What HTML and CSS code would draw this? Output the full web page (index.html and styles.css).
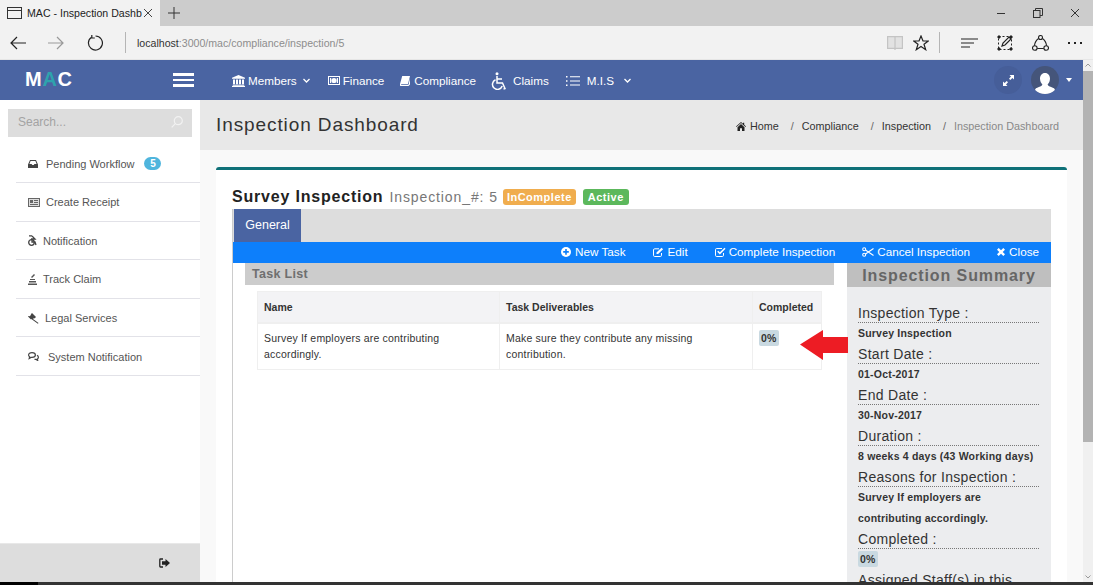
FILE: index.html

```html
<!DOCTYPE html>
<html lang="en">
<head>
  <meta charset="UTF-8">
  <title>MAC - Inspection Dashboard</title>
  <link rel="stylesheet" href="styles.css">
</head>
<body>
  <div class="tabstrip">
    <div class="tab">
      <svg width="16" height="14" viewBox="0 0 16 14" fill="none" stroke="#333"><rect x="0.5" y="1.5" width="14" height="11"/><path d="M1 4.5h13"/></svg>
      <span class="tab-title">MAC - Inspection Dashb</span>
      <svg class="tab-close" width="10" height="10" viewBox="0 0 10 10" stroke="#444"><path d="M1 1l8 8M9 1l-8 8"/></svg>
    </div>
    <svg class="tab-new" width="12" height="12" viewBox="0 0 12 12" stroke="#333"><path d="M6 0v12M0 6h12"/></svg>
    <div class="window-btns">
      <svg width="10" height="10" viewBox="0 0 10 10" stroke="#333"><path d="M1 5.5h8"/></svg>
      <svg width="10" height="10" viewBox="0 0 10 10" fill="none" stroke="#333"><rect x="0.5" y="2.5" width="6.5" height="7"/><path d="M2.5 2.5v-2h7v7h-2.5"/></svg>
      <svg width="10" height="10" viewBox="0 0 10 10" stroke="#333"><path d="M1 1l8 8M9 1l-8 8"/></svg>
    </div>
  </div>

  <div class="toolbar">
    <svg class="tb-back" width="16" height="14" viewBox="0 0 16 14" fill="none" stroke="#222" stroke-width="1.2"><path d="M16 7H1M7 1L1 7l6 6"/></svg>
    <svg class="tb-forward" width="16" height="14" viewBox="0 0 16 14" fill="none" stroke="#999" stroke-width="1.2"><path d="M0 7h15M9 1l6 6-6 6"/></svg>
    <svg class="tb-reload" width="16" height="16" viewBox="0 0 16 16" fill="none" stroke="#222" stroke-width="1.2"><path d="M4.5 2.2A7 7 0 1 0 8.500 1"/><path d="M4.800 0v3h3"/></svg>
    <span class="tb-sep"></span>
    <div class="address"><b>localhost</b>:3000/mac/compliance/inspection/5</div>
    <svg class="tb-book" width="16" height="14" viewBox="0 0 16 14" fill="#e2e2e2" stroke="#c4c4c4" stroke-width="1.2"><path d="M.6.6h6.900l.5 1 .5-1h6.900v11.800H8.500l-.5 1-.5-1H.6zM8 1.600v10.800"/></svg>
    <svg class="tb-star" width="16" height="16" viewBox="0 0 16 16" fill="none" stroke="#222" stroke-width="1.2"><path d="M8 1l2 5h5.300l-4.300 3.300 1.700 5.400L8 11.500l-4.700 3.200L5 9.300.7 6H6z"/></svg>
    <span class="tb-sep tb-sep-right"></span>
    <svg class="tb-hub" width="17" height="10" viewBox="0 0 17 10" stroke="#222" stroke-width="1.2"><path d="M0 1h17M0 5h13M0 9h9"/></svg>
    <svg class="tb-note" width="16" height="16" viewBox="0 0 16 16" fill="none" stroke="#222"><path d="M1.500 1.500h13v13h-13z" stroke-dasharray="2 2"/><path d="M1 1h2v2H1zM13 1h2v2h-2zM1 13h2v2H1zM13 13h2v2h-2z" fill="#222"/><path d="M5 11l1-3 6-6 2 2-6 6z" stroke-width="1.2"/></svg>
    <svg class="tb-share" width="17" height="16" viewBox="0 0 17 16" fill="none" stroke="#222" stroke-width="1.1"><circle cx="8.500" cy="2.500" r="2"/><circle cx="2.800" cy="13" r="2.300"/><circle cx="14.200" cy="13" r="2.300"/><path d="M6.500 3.500Q3 6 2.400 10.700M10.500 3.500Q14 6 14.600 10.700M5.200 13.500h6.600"/></svg>
    <span class="tb-more"><i></i><i></i><i></i></span>
  </div>

  <div class="app">
    <div class="app-main">
      <header class="topbar">
        <div class="logo">M<span>A</span>C</div>
        <div class="burger"><i></i><i></i><i></i></div>
        <nav class="mainnav">
          <a class="nav-members"><svg width="13" height="12" viewBox="0 0 13 12" fill="#fff"><path d="M6.500 0L13 2.800v.9H0v-.9zM1 4.500h2v4.700H1zM4 4.500h2v4.700H4zM7 4.500h2v4.700H7zM10 4.500h2v4.700h-2zM.7 9.800h11.600v.9H.7zM0 11h13v1H0z"/></svg>Members<svg class="chev" width="7" height="5" viewBox="0 0 7 5" fill="none" stroke="#fff" stroke-width="1.3"><path d="M.5 1l3 3 3-3"/></svg></a>
          <a class="nav-finance"><svg width="12" height="9" viewBox="0 0 12 9"><path d="M0 0h12v9H0z" fill="#fff"/><path d="M1 1h10v7H1z" fill="#4a64a2"/><circle cx="6" cy="4.500" r="2.600" fill="#fff"/><path d="M2 2h1.200v5H2zM8.800 2H10v5H8.800z" fill="#fff"/></svg>Finance</a>
          <a class="nav-compliance"><svg width="10" height="10" viewBox="0 0 10 10" fill="#fff"><path d="M2.200 0H10L8 8H1.500q-.7 0-.5.8h7.500L10 2.500V8.400L8.500 10H1Q-.4 10 0 8z"/></svg>Compliance</a>
          <a class="nav-claims"><svg width="16" height="18" viewBox="0 0 16 18" fill="none" stroke="#fff" stroke-width="1.5"><circle cx="6" cy="1.700" r="1.500" fill="#fff" stroke="none"/><path d="M6 4v7h5.500l2.500 5.500-1.500.6M6.200 7H11"/><path d="M4.500 7.800a5 5 0 1 0 6.700 6.200"/></svg>Claims</a>
          <a class="nav-mis"><svg width="14" height="10" viewBox="0 0 14 10" fill="#fff"><path d="M0 0h1.500v1.500H0zM0 4.200h1.500v1.500H0zM0 8.400h1.500V10H0zM4 .2h10v1H4zM4 4.400h10v1H4zM4 8.600h10v1H4z"/></svg>M.I.S<svg class="chev" width="7" height="5" viewBox="0 0 7 5" fill="none" stroke="#fff" stroke-width="1.3"><path d="M.5 1l3 3 3-3"/></svg></a>
        </nav>
        <div class="top-right">
          <span class="round-btn"><svg width="11" height="11" viewBox="0 0 11 11" fill="#fff"><path d="M6.500 0H11v4.500L9.400 3 7.300 5 6 3.700 8 1.600zM4.500 11H0V6.500L1.600 8l2.100-2L5 7.300 3 9.400z"/></svg></span>
          <span class="avatar"><svg width="22" height="22" viewBox="0 0 22 22" fill="#fff"><path d="M11 1c3.200 0 5 2.500 5 5.500 0 2.500-1 4.700-2.400 6 .3 1.300 1.500 1.900 3.500 2.600 2.500.8 3.900 1.700 3.900 3.400V22H1v-3.500c0-1.700 1.400-2.600 3.900-3.400 2-.7 3.200-1.300 3.500-2.600C7 11.200 6 9 6 6.500 6 3.500 7.800 1 11 1z"/></svg></span>
          <span class="caret"></span>
        </div>
      </header>

      <div class="app-body">
        <aside class="sidebar">
          <div class="search">
            <span>Search...</span>
            <svg width="12" height="12" viewBox="0 0 12 12" fill="none" stroke="#f2f2f2" stroke-width="1.2"><circle cx="7.300" cy="4.700" r="4"/><path d="M4.300 7.700L.7 11.300"/></svg>
          </div>
          <ul class="sidemenu">
            <li><svg class="gap-8" width="10" height="8" viewBox="0 0 10 8" fill="#444"><path d="M2 0h6l2 4.500V8H0V4.500zM2.600 1L1.400 4h2.200l.7 1h1.400l.7-1h2.200L7.400 1z"/></svg>Pending Workflow<span class="count">5</span></li>
            <li><svg class="gap-6" width="12" height="9" viewBox="0 0 12 9"><path d="M0 0h12v9H0z" fill="#666"/><path d="M1 1h10v7H1z" fill="#ddd"/><path d="M2 2h3v3H2zM6 2h4v1H6zM6 4h4v1H6zM2 6h8v1H2z" fill="#666"/></svg>Create Receipt</li>
            <li><svg class="gap-6" width="9" height="11" viewBox="0 0 9 11" fill="none" stroke="#444" stroke-width="1.3"><path d="M1 .8h3M4 1l3 3H3M4 4v3h3l1 3"/><circle cx="3.500" cy="7.500" r="2.800"/></svg>Notification</li>
            <li><svg class="gap-6" width="9" height="11" viewBox="0 0 9 11" fill="#555"><path d="M6 0l1 1-3 3-1-1zM2 5h5v1H2zM1 7h7v1.500H1zM0 9.500h9V11H0z"/></svg>Track Claim</li>
            <li><svg class="gap-6" width="11" height="11" viewBox="0 0 11 11" fill="#444"><path d="M4 0l4 4-1.500 1.500L6 5 5 6l5.500 4-.6.800L4 6.500l-.5-.5-.5.500-3-3 .5-.5L2 3.200 3.500.5z"/></svg>Legal Services</li>
            <li><svg class="gap-9" width="11" height="9" viewBox="0 0 11 9" fill="none" stroke="#444" stroke-width="1.2"><path d="M4 .6c2 0 3.400 1 3.400 2.400S6 5.400 4 5.400H3L1.200 6.500l.4-1.700C.9 4.400.6 3.800.6 3 .6 1.600 2 .6 4 .6zM9 3.200c1 .5 1.400 1.200 1.400 2 0 .7-.4 1.300-1 1.700l.3 1.500-1.700-1H6.500"/></svg>System Notification</li>
          </ul>
          <div class="side-foot">
            <svg width="11" height="10" viewBox="0 0 11 10"><path d="M4 1H1.500Q.8 1 .8 1.800v6.400Q.8 9 1.500 9H4" fill="none" stroke="#222" stroke-width="1.3"/><path d="M3 3.300h3.500V1L11 5 6.500 9V6.700H3z" fill="#222"/></svg>
          </div>
        </aside>

        <main class="content">
          <div class="page-head">
            <h2>Inspection Dashboard</h2>
            <ol class="crumbs">
              <li><svg width="10" height="9" viewBox="0 0 10 9" fill="#222"><path d="M5 0l2 1.800V.8h1.200v2L10 4.500l-.5.500L5 1 .5 5 0 4.500zM1.500 5.200L5 2l3.500 3.200V9H6V6.300H4V9H1.500z"/></svg>Home</li>
              <li>Compliance</li>
              <li>Inspection</li>
              <li class="current">Inspection Dashboard</li>
            </ol>
          </div>

          <section class="card">
            <div class="card-title">
              <h3>Survey Inspection</h3>
              <span class="subno">Inspection_#: 5</span>
              <span class="label label-warn">InComplete</span>
              <span class="label label-ok">Active</span>
            </div>
            <div class="panel">
              <div class="tabs"><a class="tab-on">General</a></div>
              <div class="actions">
                <a><svg width="10" height="10" viewBox="0 0 10 10"><circle cx="5" cy="5" r="5" fill="#fff"/><path d="M2.200 4.100h2V2.100h1.600v2h2v1.700h-2v2H4.200v-2h-2z" fill="#0d7ffb"/></svg>New Task</a>
                <a><svg width="11" height="10" viewBox="0 0 11 10" fill="none" stroke="#fff"><path d="M8.500 6v2.300q0 1.200-1.200 1.200H1.700Q.5 9.500.5 8.300V3q0-1.200 1.200-1.200H6"/><path d="M3.500 5.500L8.500.8l1.600 1.500-5 4.700H3.500z" fill="#fff" stroke="none"/></svg>Edit</a>
                <a class="tight"><svg width="11" height="10" viewBox="0 0 11 10" fill="none" stroke="#fff"><path d="M8.500 6v2.300q0 1.200-1.200 1.200H1.700Q.5 9.500.5 8.300V2.700q0-1.200 1.200-1.200H7"/><path d="M2.700 4.200l2.200 2.200L10 1.200" stroke-width="1.5"/></svg>Complete Inspection</a>
                <a class="tight"><svg width="12" height="10" viewBox="0 0 12 10" fill="none" stroke="#fff" stroke-width="1.1"><circle cx="2.200" cy="2.200" r="1.500"/><circle cx="2.200" cy="7.800" r="1.500"/><path d="M3.500 3l8 5.500M3.500 7l8-5.500"/></svg>Cancel Inspection</a>
                <a><svg width="8" height="8" viewBox="0 0 8 8"><path d="M1.700 0L4 2.300 6.300 0 8 1.700 5.700 4 8 6.300 6.300 8 4 5.700 1.700 8 0 6.300 2.300 4 0 1.700z" fill="#fff"/></svg>Close</a>
              </div>
              <div class="panel-body">
                <div class="task-col">
                  <div class="task-head">Task List</div>
                  <table class="tasks">
                    <thead>
                      <tr><th class="col-name">Name</th><th class="col-del">Task Deliverables</th><th class="col-done">Completed</th></tr>
                    </thead>
                    <tbody>
                      <tr>
                        <td>Survey If employers are contributing accordingly.</td>
                        <td>Make sure they contribute any missing contribution.</td>
                        <td><span class="pct">0%</span></td>
                      </tr>
                    </tbody>
                  </table>
                  <svg class="red-arrow" width="48" height="30" viewBox="0 0 48 30"><path d="M0 14.500L23 0v7h25v16H23v7z" fill="#ed1c24"/></svg>
                </div>
                <aside class="summary">
                  <div class="summary-head">Inspection Summary</div>
                  <dl class="summary-list">
                    <dt>Inspection Type :</dt>
                    <dd>Survey Inspection</dd>
                    <dt>Start Date :</dt>
                    <dd>01-Oct-2017</dd>
                    <dt>End Date :</dt>
                    <dd>30-Nov-2017</dd>
                    <dt>Duration :</dt>
                    <dd>8 weeks 4 days (43 Working days)</dd>
                    <dt>Reasons for Inspection :</dt>
                    <dd>Survey If employers are contributing accordingly.</dd>
                    <dt>Completed :</dt>
                    <dd><span class="pct">0%</span></dd>
                    <dt>Assigned Staff(s) in this</dt>
                  </dl>
                </aside>
              </div>
            </div>
          </section>
        </main>
      </div>
    </div>
    <div class="scrollbar">
      <svg class="scroll-arrow" width="10" height="11" viewBox="0 0 10 11" fill="none" stroke="#999"><path d="M2.500 6.500L5 4l2.500 2.500"/></svg>
      <div class="scroll-thumb"></div>
      <svg class="scroll-arrow scroll-arrow-down" width="10" height="11" viewBox="0 0 10 11" fill="none" stroke="#999"><path d="M2.500 4.500L5 7l2.500-2.500"/></svg>
    </div>
  </div>
  <div class="taskbar"></div>
</body>
</html>
```

FILE: styles.css

```css
* {
  box-sizing: border-box;
}
body {
  margin: 0;
  height: 585px;
  overflow: hidden;
  background: #fff;
  font-family: "Liberation Sans", Arial, sans-serif;
  color: #333;
}
svg {
  flex: none;
  display: block;
}

/* browser chrome */
.tabstrip {
  display: flex;
  align-items: center;
  height: 26px;
  background: #cccccc;
}
.tab {
  display: flex;
  align-items: center;
  width: 160px;
  height: 26px;
  padding-left: 7px;
  background: #f2f2f2;
}
.tab-title {
  width: 116px;
  margin-left: 4px;
  overflow: hidden;
  white-space: nowrap;
  font-size: 10.6px;
  color: #222;
}
.tab-new {
  margin-left: 8px;
}
.window-btns {
  display: flex;
  gap: 27px;
  margin-left: auto;
  padding-right: 13px;
}
.toolbar {
  display: flex;
  align-items: center;
  height: 34px;
  background: #f2f2f2;
  border-bottom: 1px solid #e6e6e6;
  padding-left: 10px;
}
.tb-forward {
  margin-left: 22px;
}
.tb-reload {
  margin-left: 23px;
}
.tb-sep {
  width: 1px;
  height: 21px;
  margin-left: 22px;
  background: #b5b5b5;
}
.address {
  margin-left: 11px;
  width: 750px;
  font-size: 10.6px;
  color: #8d8d8d;
}
.address b {
  font-weight: normal;
  color: #333;
}
.tb-star {
  margin-left: 10px;
}
.tb-sep-right {
  margin-left: 10px;
}
.tb-hub {
  margin-left: 21px;
}
.tb-note {
  margin-left: 19px;
}
.tb-share {
  margin-left: 19px;
}
.tb-more {
  display: flex;
  gap: 4px;
  margin-left: 19px;
}
.tb-more i {
  width: 2px;
  height: 2px;
  background: #222;
}

/* app frame */
.app {
  display: flex;
  height: 522px;
}
.app-main {
  flex: 1;
  min-width: 0;
  display: flex;
  flex-direction: column;
}
.taskbar {
  height: 3px;
  background: linear-gradient(90deg, #000 38px, #333 38px);
}
.scrollbar {
  width: 10px;
  display: flex;
  flex-direction: column;
  background: #f0f0f0;
}
.scroll-thumb {
  height: 371px;
  background: #b3b3b3;
}
.scroll-arrow-down {
  margin-top: auto;
}

.topbar {
  display: flex;
  align-items: center;
  height: 40px;
  flex: none;
  background: #4a64a2;
  color: #fff;
}
.logo {
  width: 173px;
  padding: 0 0 2px 25px;
  font-size: 20px;
  font-weight: bold;
  letter-spacing: 0.7px;
}
.logo span {
  color: #2ea3ad;
}
.burger {
  display: flex;
  flex-direction: column;
  gap: 3px;
  width: 21px;
}
.burger i {
  height: 2.5px;
  background: #fff;
}
.mainnav {
  display: flex;
  align-items: center;
  margin-left: 38px;
  padding-top: 1px;
  font-size: 11.7px;
}
.mainnav a {
  display: flex;
  align-items: center;
  gap: 3px;
}
.mainnav .nav-finance {
  margin-left: 18px;
}
.mainnav .nav-compliance {
  margin-left: 16px;
  gap: 4px;
}
.mainnav .nav-claims {
  margin-left: 15px;
  gap: 6px;
}
.mainnav .nav-mis {
  margin-left: 17px;
  gap: 7px;
}
.mainnav .chev {
  margin-left: 3px;
}
.top-right {
  display: flex;
  align-items: center;
  margin-left: auto;
  padding-right: 11px;
}
.round-btn, .avatar {
  display: flex;
  align-items: center;
  justify-content: center;
  width: 28px;
  height: 28px;
  border-radius: 50%;
  overflow: hidden;
}
.round-btn {
  background: #465e99;
}
.avatar {
  margin-left: 9px;
  background: #45557a;
  align-items: flex-end;
}
.caret {
  margin-left: 7px;
  border-top: 4px solid #fff;
  border-left: 3.5px solid transparent;
  border-right: 3.5px solid transparent;
}

.app-body {
  flex: 1;
  min-height: 0;
  display: flex;
}

/* sidebar */
.sidebar {
  width: 200px;
  flex: none;
  display: flex;
  flex-direction: column;
  background: #fff;
}
.search {
  display: flex;
  align-items: center;
  justify-content: space-between;
  height: 28px;
  margin: 9px 8px 0;
  padding: 0 9px 2px 10px;
  background: #dddddd;
  font-size: 12px;
  color: #a3a3a3;
}
.sidemenu {
  list-style: none;
  margin: 7.4px 0 0 16px;
  padding: 0;
  font-size: 11px;
  color: #555;
}
.sidemenu li {
  display: flex;
  align-items: center;
  height: 38.6px;
  padding: 1px 0 0 12px;
  border-bottom: 1px solid #e2e2e8;
}
.gap-6 {
  margin-right: 6px;
}
.gap-8 {
  margin-right: 8px;
}
.gap-9 {
  margin-right: 9px;
}
.count {
  margin-left: 10px;
  width: 17px;
  height: 13px;
  line-height: 13px;
  border-radius: 7px;
  text-align: center;
  font-size: 10px;
  font-weight: bold;
  color: #fff;
  background: #4fb5dd;
}
.side-foot {
  margin-top: auto;
  height: 39px;
  display: flex;
  align-items: center;
  padding-left: 159px;
  background: #dddddd;
  border-top: 1px solid #e8e8e8;
}

/* main content */
.content {
  flex: 1;
  min-width: 0;
  overflow: hidden;
  background: #f9f9f9;
}
.page-head {
  display: flex;
  align-items: center;
  justify-content: space-between;
  height: 50px;
  padding: 0 24px 0 16px;
  background: #e8e8e8;
}
.page-head h2 {
  margin: 0;
  font-size: 19px;
  font-weight: normal;
  letter-spacing: 0.9px;
  color: #333;
}
.crumbs {
  list-style: none;
  display: flex;
  margin: 2px 0 0;
  padding: 0;
  font-size: 10.8px;
  color: #333;
}
.crumbs li {
  display: flex;
  align-items: center;
  gap: 4px;
}
.crumbs li + li::before {
  content: "/";
  margin: 0 4px 0 12px;
  color: #666;
}
.crumbs .current {
  color: #888;
}
.card {
  margin: 17px 16px 0;
  height: 416px;
  padding: 0 16px;
  background: #fff;
  border-top: 3px solid #0f7178;
  border-radius: 3px 3px 0 0;
}
.card-title {
  display: flex;
  align-items: center;
  height: 39px;
  padding-top: 15px;
}
.card-title h3 {
  margin: 0 6px 0 0;
  font-size: 16px;
  letter-spacing: 0.8px;
  color: #222;
}
.subno {
  font-size: 14px;
  letter-spacing: 0.9px;
  color: #777;
  margin-right: 5px;
}
.label {
  margin-right: 7px;
  padding: 2px 4px;
  border-radius: 3px;
  font-size: 11px;
  line-height: 12px;
  font-weight: bold;
  letter-spacing: 0.5px;
  color: #fff;
}
.label-warn {
  background: #f0ad4e;
}
.label-ok {
  background: #5cb85c;
  padding: 2px 5px;
}
.panel {
  border-left: 1px solid #ccc;
}
.tabs {
  height: 33px;
  padding-left: 1px;
  background: #dddddd;
  display: flex;
}
.tab-on {
  width: 67px;
  line-height: 33px;
  text-align: center;
  font-size: 12.5px;
  color: #fff;
  background: #4a64a2;
}
.actions {
  display: flex;
  justify-content: flex-end;
  align-items: center;
  gap: 27px;
  height: 21px;
  padding: 0 12px 2px 0;
  background: #0d7ffb;
  font-size: 11.7px;
  color: #fff;
}
.actions a {
  display: flex;
  align-items: center;
  gap: 4px;
}
.actions .tight {
  gap: 3px;
}
.panel-body {
  display: flex;
}
.task-col {
  position: relative;
  flex: 1;
  padding: 0 13px 0 12px;
}
.task-head {
  height: 22px;
  line-height: 22px;
  padding-left: 7px;
  background: #cccccc;
  font-size: 12.5px;
  font-weight: bold;
  letter-spacing: 0.3px;
  color: #6f6f6f;
}
.tasks {
  width: 565px;
  margin: 6px 0 0 12px;
  border-collapse: collapse;
  table-layout: fixed;
  font-size: 10.5px;
  line-height: 16px;
  color: #333;
}
.tasks th, .tasks td {
  border: 1px solid #efefef;
  text-align: left;
  vertical-align: top;
}
.tasks th {
  padding: 7px 6px;
  background: #f3f3f5;
  border-bottom-width: 2px;
}
.tasks td {
  padding: 6px 6px 7px;
  letter-spacing: 0.2px;
}
.col-name {
  width: 242px;
}
.col-del {
  width: 253px;
}
.pct {
  display: inline-block;
  padding: 0 2px;
  line-height: 16px;
  border-radius: 2px;
  background: #c9d9e1;
  font-weight: bold;
}
.red-arrow {
  position: absolute;
  left: 567px;
  top: 67px;
}
.summary {
  width: 204px;
  flex: none;
  background: #ecedef;
  height: 320px;
}
.summary-head {
  height: 24px;
  line-height: 25px;
  text-align: center;
  background: #bfbfbf;
  font-size: 16px;
  font-weight: bold;
  letter-spacing: 0.9px;
  color: #666;
}
.summary-list {
  margin: 16px 12px 0 11px;
}
.summary-list dt {
  height: 20px;
  line-height: 20px;
  border-bottom: 1px dotted #777;
  font-size: 14px;
  letter-spacing: 0.3px;
  color: #333;
}
.summary-list dd {
  margin: 0;
  font-size: 10.5px;
  line-height: 21px;
  font-weight: bold;
  letter-spacing: 0.2px;
  color: #333;
}
```
